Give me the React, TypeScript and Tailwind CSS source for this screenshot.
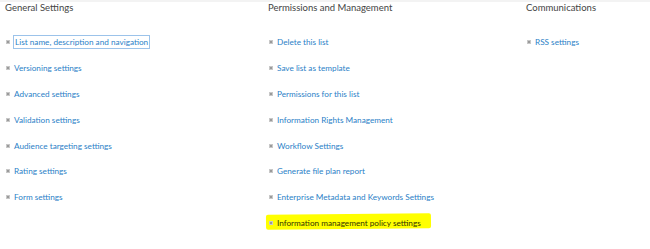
import React from 'react';

const general = [
  'List name, description and navigation',
  'Versioning settings',
  'Advanced settings',
  'Validation settings',
  'Audience targeting settings',
  'Rating settings',
  'Form settings',
];

const permissions = [
  'Delete this list',
  'Save list as template',
  'Permissions for this list',
  'Information Rights Management',
  'Workflow Settings',
  'Generate file plan report',
  'Enterprise Metadata and Keywords Settings',
  'Information management policy settings',
];

const communications = ['RSS settings'];

function Bullet() {
  return <span className="inline-block w-[4px] h-[4px] bg-[#9a9a9a] border border-[#c8c8c8] mr-[4px] shrink-0" />;
}

function Column({ title, items, width, focusFirst, highlightLast }: { title: string; items: string[]; width: string; focusFirst?: boolean; highlightLast?: boolean }) {
  return (
    <div className={width}>
      <h3 className="h-[12px] leading-[12px] text-[9.5px] text-[#444444] font-normal">{title}</h3>
      <ul className="mt-[15px]">
        {items.map((item, i) => {
          const last = highlightLast && i === items.length - 1;
          return (
            <li key={item} className={`h-[25.9px] flex items-center pl-[1px] ${last ? 'relative' : ''}`}>
              {last && <span className="absolute left-[-2px] top-[4px] w-[165px] h-[15px] bg-[#ffff00] -rotate-[0.6deg] rounded-[2px]" />}
              <span className="relative flex items-center">
                <Bullet />
                <a
                  href="#"
                  className={`text-[8.2px] leading-[12px] ${last ? 'text-[#333300]' : 'text-[#2b7fc7]'} ${focusFirst && i === 0 ? 'outline outline-1 outline-[#9cc3ea] px-[1px]' : ''}`}
                >
                  {item}
                </a>
              </span>
            </li>
          );
        })}
      </ul>
    </div>
  );
}

export default function App() {
  return (
    <div className="w-[650px] h-[249px] bg-white overflow-hidden" style={{ fontFamily: 'Lato, "Open Sans", sans-serif' }}>
      <div className="h-[2px] bg-[#f3f3f3]" />
      <div className="flex pl-[5px]">
        <Column title="General Settings" items={general} width="w-[263px]" focusFirst />
        <Column title="Permissions and Management" items={permissions} width="w-[258px]" highlightLast />
        <Column title="Communications" items={communications} width="flex-1" />
      </div>
    </div>
  );
}
